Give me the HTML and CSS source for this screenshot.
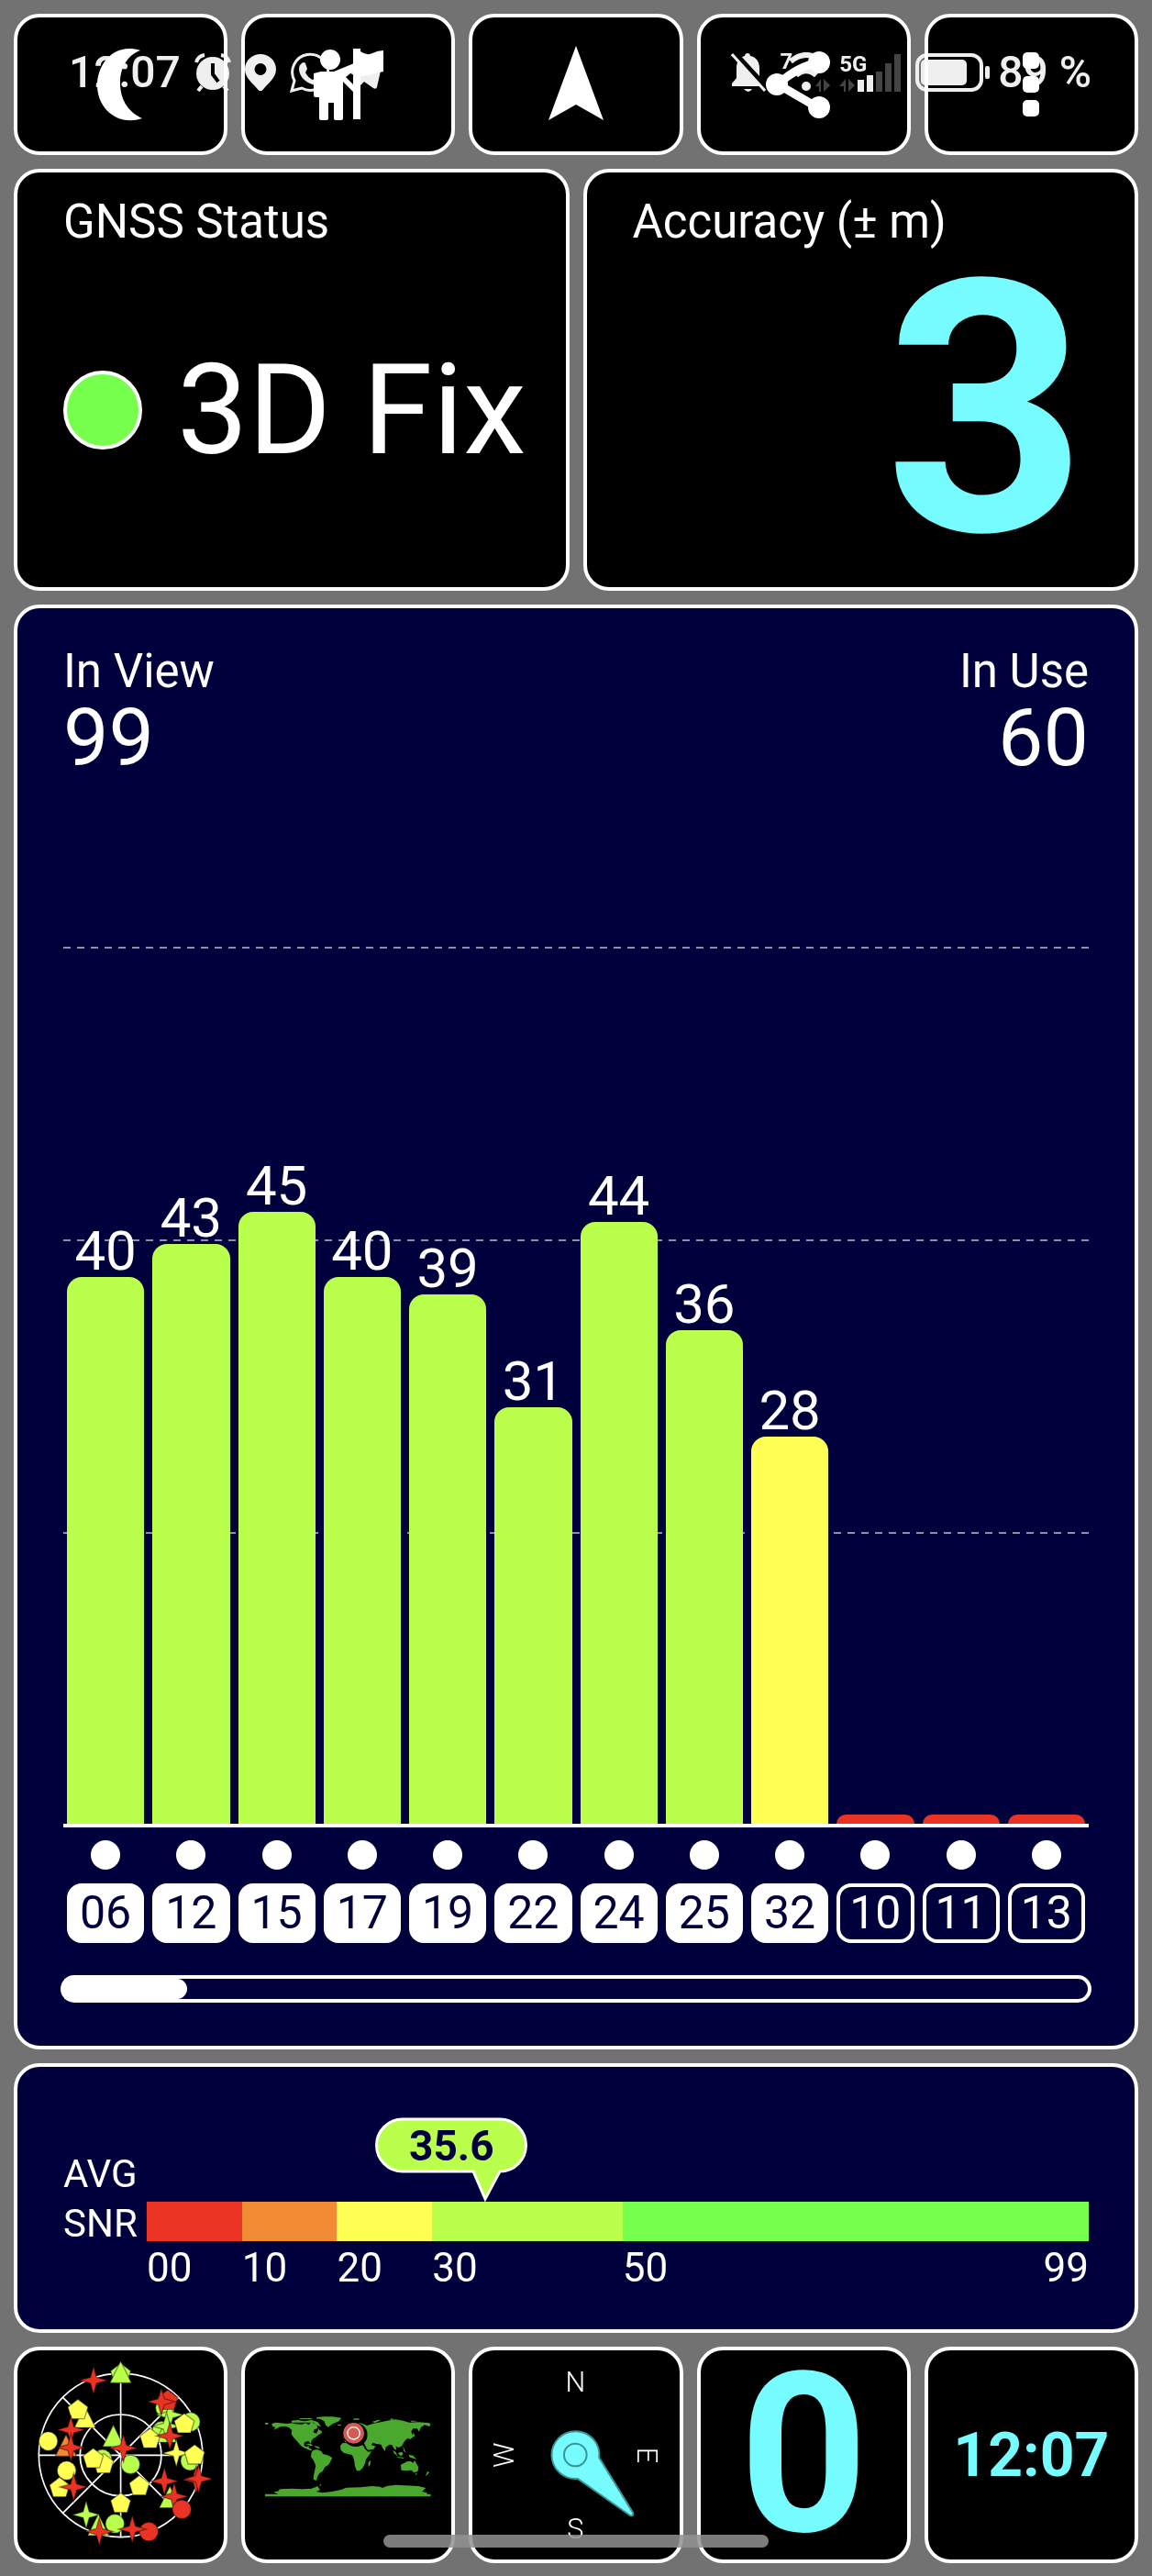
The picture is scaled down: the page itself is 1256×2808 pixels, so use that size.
FILE: index.html
```html
<!DOCTYPE html>
<html lang="en">
<head>
    <meta charset="UTF-8">
    <meta name="viewport" content="width=device-width, initial-scale=1.0">
    <title>GNSS Status</title>
    <link rel="stylesheet" href="styles.css">
</head>
<body>
    <!-- system status bar, drawn over the toolbar -->
    <div class="status-bar">
        <div class="status-group">
            <span class="status-text">12:07</span>
            <svg width="40" height="42" viewBox="0 0 40 42">
                <circle cx="20" cy="22" r="18" fill="#efefef"/>
                <path d="M2 10a11 11 0 0 1 9-8M38 10a11 11 0 0 0-9-8M8 36l-4 5M32 36l4 5" fill="none" stroke="#efefef" stroke-width="4"/>
                <path d="M20 11v12l6 8" fill="none" stroke="#000" stroke-width="4"/>
            </svg>
            <svg width="34" height="42" viewBox="0 0 34 42">
                <path fill="#efefef" fill-rule="evenodd" d="M17 1C8 1 0 8 0 17.500C0 27 9 33 15 40.500Q17 42 19 40.500C25 33 34 27 34 17.500C34 8 26 1 17 1zM17 11a6.500 6.500 0 1 1 0 13a6.500 6.500 0 1 1 0-13z"/>
            </svg>
            <svg width="44" height="44" viewBox="0 0 44 44">
                <path d="M2 42l3-11A19.500 19.500 0 1 1 13 39z" fill="none" stroke="#efefef" stroke-width="3"/>
                <path fill="#efefef" d="M13 12q2-2 4 0l2 6l-2 4q3 6 8 8l4-3l6 4q0 5-6 5c-10-1-19-9-19-18q0-4 3-6z"/>
            </svg>
            <svg width="44" height="38" viewBox="0 0 44 38">
                <path fill="#efefef" d="M1 16L41 1q3 0 2 3l-7 31q-1 3-4 1L22 29l-5 5l-3-10z"/>
                <path d="M14 23L33 9" stroke="#000" stroke-width="2"/>
            </svg>
        </div>
        <div class="status-group">
            <svg width="38" height="44" viewBox="0 0 38 44">
                <path fill="#efefef" d="M1 37v-3l5-6V17C6 10 10 5 15 4c0-4 6-4 6 0c6 1 10 6 10 13v11l5 6v3zM14 40h9q-4 6-9 0z"/>
                <path d="M3 0l36 39" stroke="#000" stroke-width="6"/>
                <path d="M1 2l36 40" stroke="#efefef" stroke-width="3"/>
            </svg>
            <span class="status-small">7</span>
            <svg class="wifi" width="46" height="44" viewBox="0 0 46 44">
                <path d="M1 10q17-14 34 0M7 25q11-10 22 0" fill="none" stroke="#efefef" stroke-width="6"/>
                <circle cx="18" cy="37" r="5" fill="#efefef"/>
                <path fill="#444" d="M28 37l6-8v14h-2v-6zM37 29v14l7-7z"/>
            </svg>
            <div class="mobile">
                <span class="status-small">5G</span>
                <svg width="68" height="44" viewBox="0 0 68 44">
                    <path fill="#444" d="M0 37l7-8v14H5v-6zM10 29v14l7-7z"/>
                    <path fill="#efefef" d="M20 30h7v13h-7zM30 25h7v18h-7z"/>
                    <path fill="#444" d="M40 21h7v22h-7zM50 12h7v31h-7zM60 2h7v41h-7z"/>
                </svg>
            </div>
            <div class="battery">
                <svg width="82" height="42" viewBox="0 0 82 42">
                    <rect x="2" y="2" width="70" height="38" rx="11" fill="none" stroke="#efefef" stroke-width="4"/>
                    <rect x="6" y="7" width="50" height="28" rx="5" fill="#efefef"/>
                    <rect x="76" y="14" width="5" height="14" rx="2" fill="#efefef"/>
                </svg>
                <span class="status-text">89 %</span>
            </div>
        </div>
    </div>

    <main class="screen">
        <nav class="row row-five">
            <button class="card tool" aria-label="Night mode">
                <svg class="icon" viewBox="0 0 80 80"><path d="M61 3C32-6 14 18 14 41C14 66 36 86 63 77C46 69 39 55 39 38C39 22 47 8 61 3z"/></svg>
            </button>
            <button class="card tool" aria-label="Waypoint">
                <svg class="icon" viewBox="0 0 80 80">
                    <circle cx="20" cy="13" r="11"/>
                    <rect x="45" y="1" width="8" height="77"/>
                    <path d="M53 4q7 5 13 2t12-3v23q-6 1-11 3t-14 2zM10 26h14l22-9v8l-9 7l8 8v8l-11-11v40q0 2-2 2h-6q-2 0-2-2V60h-6v17q0 2-2 2h-6q-2 0-2-2V54H4q-2 0-2-2V28q4-1 8-2z"/>
                </svg>
            </button>
            <button class="card tool" aria-label="Navigate">
                <svg class="icon" viewBox="0 0 80 80"><path d="M40-2L70 79L40 62L10 79z"/></svg>
            </button>
            <button class="card tool" aria-label="Share">
                <svg class="icon" viewBox="0 0 80 80">
                    <path d="M57 16Q34 20 12 40L57 66" fill="none" stroke="#fff" stroke-width="9"/>
                    <circle cx="11" cy="40" r="12"/><circle cx="57" cy="16" r="12"/><circle cx="57" cy="65" r="12"/>
                </svg>
            </button>
            <button class="card tool" aria-label="More">
                <svg class="icon" viewBox="0 0 80 80">
                    <rect x="31" y="5" width="18" height="18" rx="5"/><rect x="31" y="31" width="18" height="18" rx="5"/><rect x="31" y="57" width="18" height="18" rx="5"/>
                </svg>
            </button>
        </nav>

        <section class="row row-two">
            <div class="card reading">
                <h2 class="title">GNSS Status</h2>
                <div class="reading-body"><span class="fix-dot"></span><span class="fix-text">3D Fix</span></div>
            </div>
            <div class="card reading">
                <h2 class="title">Accuracy (± m)</h2>
                <div class="reading-body reading-right"><span class="accuracy">3</span></div>
            </div>
        </section>

        <section class="card panel satellites">
            <div class="counts">
                <div><h2 class="title">In View</h2><div class="count">99</div></div>
                <div class="count-right"><h2 class="title">In Use</h2><div class="count">60</div></div>
            </div>
            <div class="plot columns">
                <div class="bar" style="height: 62.3%"><span>40</span></div>
                <div class="bar" style="height: 66.1%"><span>43</span></div>
                <div class="bar" style="height: 69.8%"><span>45</span></div>
                <div class="bar" style="height: 62.3%"><span>40</span></div>
                <div class="bar" style="height: 60.4%"><span>39</span></div>
                <div class="bar" style="height: 47.5%"><span>31</span></div>
                <div class="bar" style="height: 68.6%"><span>44</span></div>
                <div class="bar" style="height: 56.3%"><span>36</span></div>
                <div class="bar bar-medium" style="height: 44.1%"><span>28</span></div>
                <div class="bar bar-none" style="height: 1%"></div>
                <div class="bar bar-none" style="height: 1%"></div>
                <div class="bar bar-none" style="height: 1%"></div>
            </div>
            <div class="columns dots">
                <i></i><i></i><i></i><i></i><i></i><i></i><i></i><i></i><i></i><i></i><i></i><i></i>
            </div>
            <div class="columns ids">
                <span class="id">06</span>
                <span class="id">12</span>
                <span class="id">15</span>
                <span class="id">17</span>
                <span class="id">19</span>
                <span class="id">22</span>
                <span class="id">24</span>
                <span class="id">25</span>
                <span class="id">32</span>
                <span class="id id-unused">10</span>
                <span class="id id-unused">11</span>
                <span class="id id-unused">13</span>
            </div>
            <div class="scroll-track"><div class="scroll-thumb"></div></div>
        </section>

        <section class="card panel snr">
            <div class="snr-label">AVG<br>SNR</div>
            <div class="snr-meter">
                <div class="scale scale-bar">
                    <div class="ten red"></div>
                    <div class="ten orange"></div>
                    <div class="ten yellow"></div>
                    <div class="twenty lime"></div>
                    <div class="rest green"></div>
                    <div class="marker" style="left: 35.96%">
                        <svg width="166" height="92" viewBox="0 0 166 92"><path d="M30 2H136A28 28 0 0 1 136 59L120 89L107 59H30A28 28 0 0 1 30 2z" fill="#b9ff4c" stroke="#fff" stroke-width="3"/></svg>
                        <span>35.6</span>
                    </div>
                </div>
                <div class="scale scale-ticks">
                    <div class="ten">00</div>
                    <div class="ten">10</div>
                    <div class="ten">20</div>
                    <div class="twenty">30</div>
                    <div class="rest"><span>50</span><span>99</span></div>
                </div>
            </div>
        </section>

        <nav class="row row-five">
            <button class="card tile" aria-label="Sky view">
                <svg viewBox="57 62 676 684">
                    <defs>
                        <path id="star" d="M0-45L10-10L45 0L10 10L0 45L-10 10L-45 0L-10-10z"/>
                        <path id="tri" d="M0-38L35 33H-35z"/>
                        <path id="pent" d="M0-34L33-9L21 30H-21L-33-9z"/>
                        <circle id="dot" r="31"/>
                    </defs>
                    <g fill="none" stroke="#fff" stroke-width="5">
                        <circle cx="395" cy="405" r="268"/>
                        <circle cx="395" cy="405" r="133"/>
                        <path d="M395 137V673M127 405H663M205 215L585 595M205 595L585 215"/>
                    </g>
                    <g stroke="rgba(0,0,0,.4)" stroke-width="4">
                        <g fill="#b9ff4c">
                            <use href="#pent" x="395" y="138"/><use href="#tri" x="395" y="135"/>
                            <use href="#tri" x="371" y="344"/><use href="#dot" x="335" y="417"/>
                            <use href="#dot" x="427" y="435"/><use href="#dot" x="376" y="629"/>
                            <use href="#star" x="282" y="600"/><use href="#tri" x="322" y="635"/>
                            <use href="#dot" x="540" y="250"/><use href="#star" x="556" y="273"/>
                            <use href="#dot" x="529" y="325"/><use href="#tri" x="543" y="330"/>
                            <use href="#star" x="545" y="310"/><use href="#dot" x="624" y="296"/>
                            <use href="#dot" x="622" y="424"/><use href="#tri" x="556" y="544"/>
                        </g>
                        <g fill="#f08a33"><use href="#tri" x="216" y="375"/></g>
                        <g fill="#ffff54">
                            <use href="#tri" x="278" y="282"/><use href="#pent" x="255" y="256"/>
                            <use href="#dot" x="158" y="359"/><use href="#pent" x="195" y="511"/>
                            <use href="#dot" x="218" y="455"/><use href="#pent" x="339" y="433"/>
                            <use href="#pent" x="305" y="416"/><use href="#pent" x="456" y="505"/>
                            <use href="#pent" x="395" y="562"/><use href="#pent" x="491" y="351"/>
                            <use href="#pent" x="603" y="302"/><use href="#star" x="577" y="398"/>
                            <use href="#pent" x="637" y="404"/>
                        </g>
                        <g fill="#ea3323">
                            <use href="#star" x="306" y="160"/><use href="#pent" x="549" y="225"/>
                            <use href="#star" x="528" y="230"/><use href="#star" x="232" y="322"/>
                            <use href="#star" x="232" y="380"/><use href="#star" x="404" y="382"/>
                            <use href="#star" x="241" y="509"/><use href="#star" x="556" y="342"/>
                            <use href="#star" x="538" y="490"/><use href="#star" x="642" y="485"/>
                            <use href="#star" x="650" y="482"/><use href="#star" x="570" y="540"/>
                            <use href="#dot" x="595" y="582"/><use href="#dot" x="487" y="655"/>
                            <use href="#star" x="433" y="647"/><use href="#star" x="325" y="655"/>
                        </g>
                    </g>
                </svg>
            </button>
            <button class="card tile" aria-label="World map">
                <svg viewBox="52 62 676 684">
                    <g fill="#4ba82e">
                        <path d="M140 302L152 298L190 302L206 300L218 303L240 304L250 300L262 306L268 296L280 302L286 300L290 316L278 322L276 330L286 334L290 326L294 316L296 324L302 324L304 332L290 340L284 346L276 350L270 358L268 368L262 360L254 360L246 364L246 374L254 378L260 374L262 382L268 384L272 390L264 388L252 384L240 378L232 370L222 358L212 348L204 336L206 324L196 314L182 310L168 312L156 318L146 322L152 314L142 310z"/>
                        <path d="M286 281L310 279L340 279L368 283L360 294L340 302L324 313L316 306L312 294L300 287L286 285zM204 292L226 290L246 294L270 290L290 296L302 312L290 308L276 298L240 298L206 298zM232 284h40v3h-40zM118 299h10v5h-10zM356 305l12-1-3 5-9-1z"/>
                        <path d="M248 370l18-3 10 6-8 1-12-3zM278 375l16 2 4 6-14-3z"/>
                        <path d="M276 388L290 387L302 392L308 401L322 405L338 413L332 426L326 436L314 444L306 458L296 464L290 474L286 488L276 484L278 466L284 440L278 424L268 410L270 396z"/>
                        <path d="M372 365L392 366L406 370L420 376L438 372L446 386L456 394L466 392L458 406L448 418L446 430L438 446L428 456L418 456L412 440L410 424L406 410L402 404L386 400L376 398L366 388L364 374zM456 428l8-6-2 14-6 8z"/>
                        <path d="M378 362L380 350L374 350L378 340L392 330L400 320L408 304L430 300L452 308L470 302L500 296L518 292L544 288L570 292L590 298L620 297L656 300L660 304L656 311L640 306L628 314L622 328L616 318L602 318L596 328L602 342L594 352L584 350L574 360L566 374L556 380L546 376L548 388L540 384L534 372L526 370L514 378L510 392L502 380L498 370L482 368L470 364L466 372L480 376L472 386L454 388L446 374L440 362L424 362L416 354L404 358L394 354L388 364z"/>
                        <path d="M468 296l20-7 8 2-18 8zM408 285h18v4h-18zM530 285l12 2-14 4zM594 292l26 1-22 3zM604 330l4 12-12 9-6 2 10-9z"/>
                        <path d="M536 388l10 8 6 12-12-9zM550 410l22 3v3l-20-3zM552 398l14-4 4 8-8 6zM570 376l5 12 4 10-8-8zM588 403l14 3 12 12-22-6z"/>
                        <path d="M562 436L574 430L582 426L594 424L602 430L608 422L614 434L620 444L618 458L606 462L596 454L580 456L564 454zM610 465h6l-4 6zM650 458l6 2-6 8-8 6zM298 498l3 4-4 6z"/>
                        <path d="M118 532H162L146 526L162 522L166 516L206 514L240 516L270 514L290 507L298 518L286 524L306 528L338 524L366 518L384 511L430 510L468 506L494 508L502 512L516 506L546 502L576 504L620 506L644 512L632 524L648 528V532H660V540H118z"/>
                    </g>
                    <circle cx="414" cy="338" r="39" fill="#000"/>
                    <circle cx="408" cy="333" r="34" fill="#d55a55"/>
                    <circle cx="408" cy="333" r="20" fill="none" stroke="#fff" stroke-width="4"/>
                </svg>
            </button>
            <button class="card tile" aria-label="Compass">
                <svg viewBox="797 62 676 684">
                    <g class="compass-text">
                        <text x="1134" y="198">N</text>
                        <text x="1134" y="677">S</text>
                        <text transform="translate(1337 405) rotate(90)">E</text>
                        <text transform="translate(932 405) rotate(-90)">W</text>
                    </g>
                    <path d="M1212 413L1322 592Q1326 606 1313 602L1142 482A78 78 0 1 1 1212 413z" fill="#76fbff" stroke="#3b9597" stroke-width="6"/>
                    <circle cx="1134" cy="404" r="37" fill="none" stroke="#3b9597" stroke-width="6"/>
                </svg>
            </button>
            <button class="card tile"><span class="speed">0</span></button>
            <button class="card tile"><span class="clock">12:07</span></button>
        </nav>
    </main>
    <div class="home-indicator"></div>
</body>
</html>
```
FILE: styles.css
```css
* {
    box-sizing: border-box;
}
body {
    font-family: Roboto, "Liberation Sans", sans-serif;
    background-color: #727272;
    color: #fff;
    margin: 0;
    position: relative;
}
.screen {
    display: flex;
    flex-direction: column;
    gap: 15px;
    padding: 15px;
}
.row {
    display: grid;
    gap: 15px;
}
.row-five {
    grid-template-columns: repeat(5, 1fr);
}
.row-two {
    grid-template-columns: repeat(2, 1fr);
}
.card {
    background-color: #000;
    border: 4px solid #fff;
    border-radius: 28px;
    color: #fff;
    font-family: inherit;
    min-width: 0;
}
.panel {
    background-color: #00003c;
}
.title {
    font-size: 51px;
    font-weight: 400;
    line-height: 60px;
    margin: 0;
}

/* toolbar */
.tool {
    display: flex;
    align-items: center;
    justify-content: center;
    height: 154px;
    padding: 0;
    cursor: pointer;
}
.icon {
    width: 80px;
    height: 80px;
    fill: #fff;
    overflow: visible;
}

/* status bar */
.status-bar {
    position: absolute;
    top: 50px;
    left: 75px;
    right: 66px;
    height: 58px;
    display: flex;
    justify-content: space-between;
    color: #efefef;
    mix-blend-mode: lighten;
    pointer-events: none;
    z-index: 2;
}
.status-group {
    display: flex;
    align-items: center;
    gap: 15px;
}
.status-text {
    font-size: 48px;
    font-weight: 500;
    line-height: 58px;
    white-space: nowrap;
}
.status-small {
    font-size: 24px;
    font-weight: 700;
    line-height: 26px;
    align-self: flex-start;
    padding-top: 4px;
}
.wifi {
    margin-left: -18px;
}
.mobile {
    position: relative;
    display: flex;
    margin-left: -7px;
}
.mobile .status-small {
    position: absolute;
    top: -4px;
    left: 0;
}
.battery {
    display: flex;
    align-items: center;
    gap: 8px;
}

/* readings */
.reading {
    display: flex;
    flex-direction: column;
    min-height: 459px;
    padding: 24px 36px 18px 50px;
}
.reading-body {
    flex: 1;
    display: flex;
    align-items: center;
    gap: 38px;
}
.reading-right {
    justify-content: flex-end;
    padding-right: 16px;
}
.fix-dot {
    flex: none;
    width: 86px;
    height: 86px;
    border: 4px solid #fff;
    border-radius: 50%;
    background-color: #76ff4c;
}
.fix-text {
    font-size: 138px;
    line-height: 160px;
    white-space: nowrap;
}
.accuracy {
    color: #76fbff;
    font-size: 384px;
    font-weight: 700;
    line-height: 350px;
}

/* satellites chart */
.satellites {
    display: flex;
    flex-direction: column;
    min-height: 1575px;
    padding: 39px 50px 47px;
}
.counts {
    display: flex;
    justify-content: space-between;
}
.count {
    font-size: 88px;
    line-height: 84px;
}
.count-right {
    text-align: right;
}
.columns {
    display: grid;
    grid-template-columns: repeat(12, 1fr);
    gap: 9px;
    padding: 0 4px;
}
.plot {
    height: 960px;
    margin-top: auto;
    align-items: end;
    border-bottom: 4px solid #fff;
    background-image:
        repeating-linear-gradient(90deg, #8e8ea6 0 8px, transparent 8px 15px),
        repeating-linear-gradient(90deg, #8e8ea6 0 8px, transparent 8px 15px),
        repeating-linear-gradient(90deg, #8e8ea6 0 8px, transparent 8px 15px);
    background-size: 100% 2px;
    background-position: 0 0, 0 33.4%, 0 66.9%;
    background-repeat: no-repeat;
}
.bar {
    display: flex;
    justify-content: center;
    background-color: #b9ff4c;
    border-radius: 16px 16px 0 0;
}
.bar span {
    height: 60px;
    margin-top: -58px;
    font-size: 60px;
    line-height: 60px;
}
.bar-medium {
    background-color: #ffff54;
}
.bar-none {
    background-color: #ea3323;
}
.dots {
    margin-top: 14px;
    justify-items: center;
}
.dots i {
    width: 32px;
    height: 32px;
    border-radius: 50%;
    background-color: #fff;
}
.ids {
    margin-top: 15px;
}
.id {
    height: 65px;
    border: 4px solid #fff;
    border-radius: 16px;
    background-color: #fff;
    color: #00003c;
    font-size: 50px;
    line-height: 57px;
    text-align: center;
}
.id-unused {
    background-color: transparent;
    color: #fff;
}
.scroll-track {
    height: 30px;
    margin: 35px -3px 0;
    border: 4px solid #fff;
    border-radius: 15px;
}
.scroll-thumb {
    width: 12%;
    height: 100%;
    background-color: #fff;
    border-radius: 0 15px 15px 0;
}

/* average SNR */
.snr {
    display: flex;
    min-height: 294px;
    padding: 90px 50px 40px;
}
.snr-label {
    width: 91px;
    font-size: 42px;
    line-height: 54px;
}
.snr-meter {
    flex: 1;
    padding-top: 57px;
}
.scale {
    display: flex;
}
.scale-bar {
    position: relative;
    height: 43px;
}
.scale-ticks {
    margin-top: 4px;
    font-size: 44px;
    line-height: 50px;
}
.ten {
    flex: 10 1 0;
}
.twenty {
    flex: 20 1 0;
}
.rest {
    flex: 49 1 0;
    display: flex;
    justify-content: space-between;
}
.red {
    background-color: #ea3323;
}
.orange {
    background-color: #f08a33;
}
.yellow {
    background-color: #ffff54;
}
.lime {
    background-color: #b9ff4c;
}
.green {
    background-color: #76ff4c;
}
.marker {
    position: absolute;
    bottom: 100%;
    width: 166px;
    height: 92px;
    margin-left: -120px;
    color: #00003c;
    font-size: 46px;
    font-weight: 700;
    line-height: 62px;
    text-align: center;
}
.marker svg {
    position: absolute;
    left: 0;
    top: 0;
}
.marker span {
    position: relative;
}

/* bottom tiles */
.tile {
    display: flex;
    align-items: center;
    justify-content: center;
    height: 236px;
    padding: 0;
    cursor: pointer;
}
.tile svg {
    width: 100%;
    height: 100%;
}
.compass-text {
    fill: #fff;
    font-size: 92px;
    font-weight: 300;
    text-anchor: middle;
}
.speed {
    color: #76fbff;
    font-size: 244px;
    font-weight: 700;
    line-height: 228px;
}
.clock {
    color: #76fbff;
    font-size: 66px;
    font-weight: 700;
}
.home-indicator {
    position: absolute;
    bottom: 32px;
    left: 33.3%;
    right: 33.3%;
    height: 14px;
    border-radius: 7px;
    background-color: rgba(145, 145, 145, 0.85);
}
```
